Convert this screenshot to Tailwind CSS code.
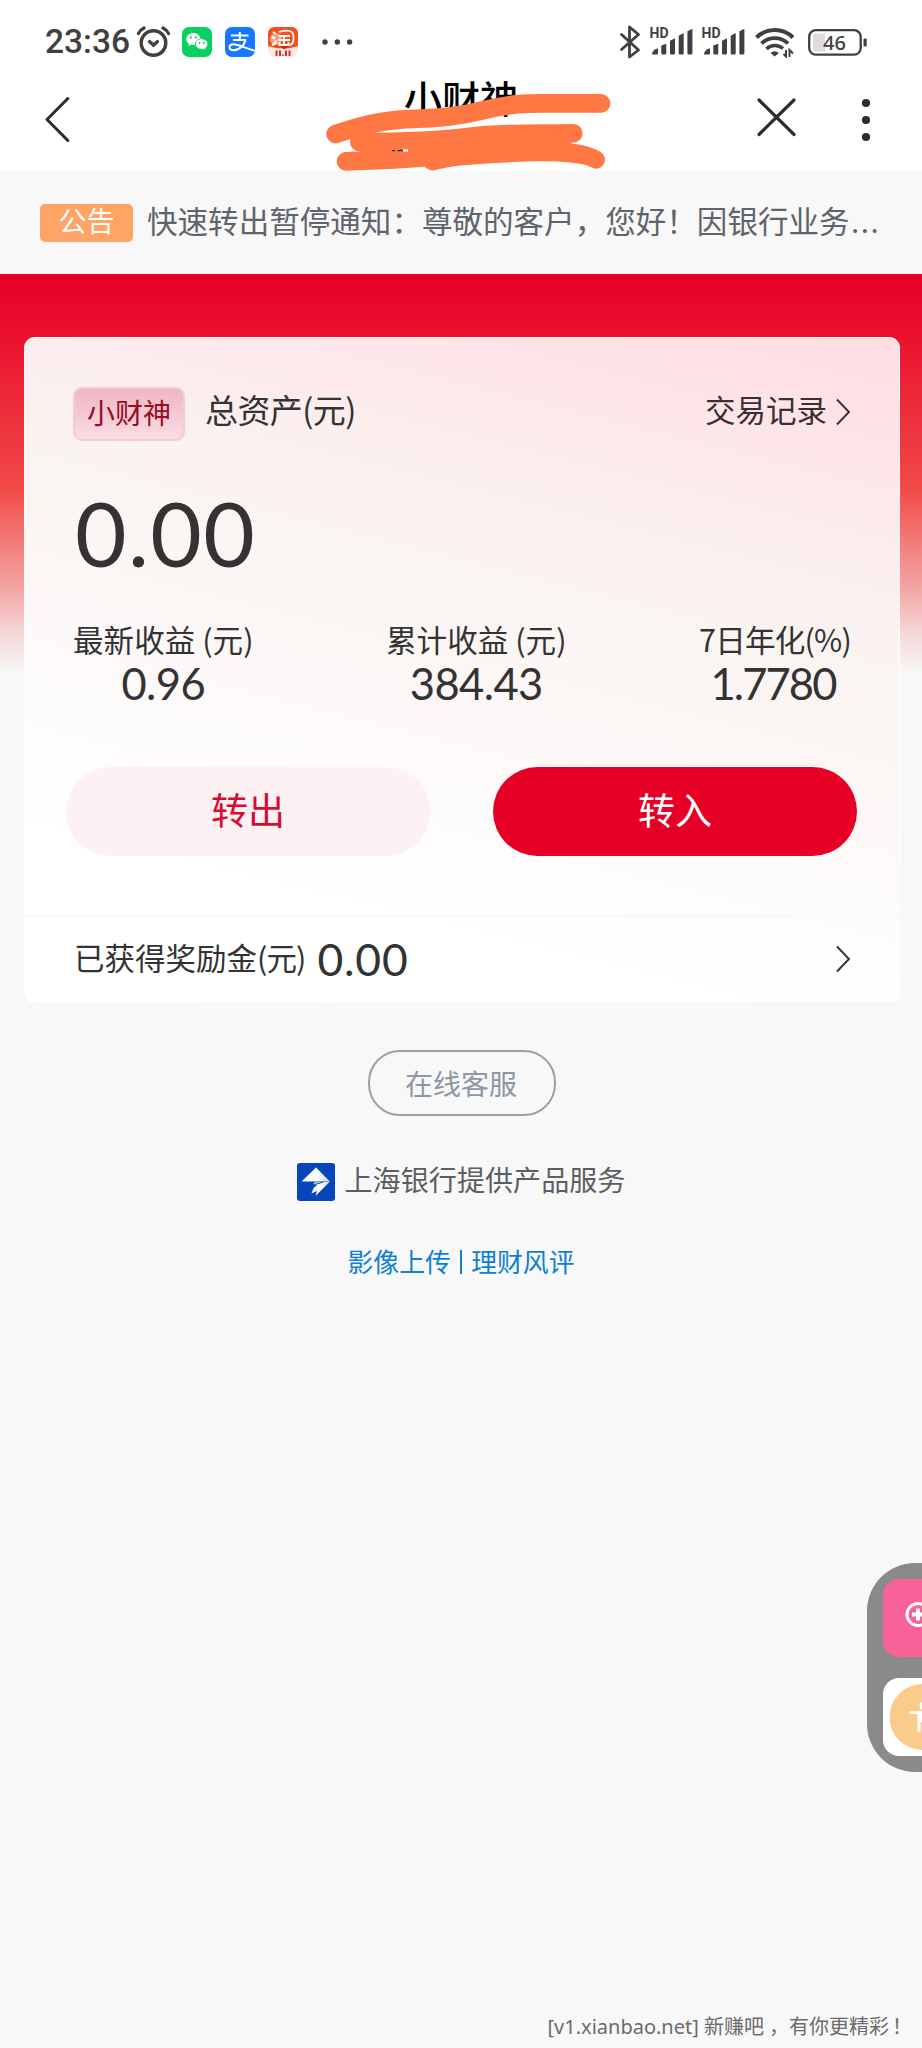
<!DOCTYPE html>
<html lang="zh-CN">
<head>
<meta charset="utf-8">
<title>小财神</title>
<script src="https://cdn.jsdelivr.net/npm/@tailwindcss/browser@4"></script>
</head>
<body class="relative flex h-[2048px] w-[922px] flex-col overflow-hidden bg-[#f8f8f8] font-['Noto_Sans_CJK_SC',sans-serif] font-normal whitespace-nowrap text-[#333]">

<!-- status bar -->
<header class="relative bg-white">
  <div class="flex h-[84px] items-center pl-[45px] text-[#404040]">
    <span class="w-[91px] font-[Roboto,sans-serif] text-[33.500px] leading-none font-medium">23:36</span>
    <svg class="h-[34px] w-[34px]" viewBox="0 0 34 34" fill="none" stroke="#404040" stroke-linecap="round"><circle cx="17.5" cy="18" r="12.3" stroke-width="3.4"/><path d="M13.5 16.500l4 3.700 4-3.700" stroke-width="3.200"/><path d="M2.500 8.500Q4 5 8 3M32.500 8.500Q31 5 27 3" stroke-width="3.200"/></svg>
    <svg class="ml-[12px] h-[30px] w-[30px]" viewBox="0 0 30 30"><rect width="30" height="30" rx="7" fill="#07d160"/><path d="M11.300 6c-4 0-7 2.600-7 6 0 2 1 3.600 2.600 4.700L6.200 19l2.900-1.400c.7.200 1.500.3 2.200.3 4 0 7.100-2.600 7.100-5.900S15.300 6 11.300 6z" fill="#fff"/><path d="M19.600 11.800c-3.500 0-6.200 2.300-6.200 5.200s2.700 5.300 6.200 5.300c.7 0 1.300-.1 1.900-.3l2.500 1.300-.6-2.100c1.500-1 2.400-2.500 2.400-4.200 0-2.900-2.800-5.200-6.200-5.200z" fill="#fff" stroke="#07d160" stroke-width=".8"/><g fill="#07a850"><circle cx="8.800" cy="10.500" r="1"/><circle cx="13.700" cy="10.500" r="1"/><circle cx="17.500" cy="15.800" r=".9"/><circle cx="21.700" cy="15.800" r=".9"/></g></svg>
    <svg class="ml-[13px] h-[30px] w-[30px]" viewBox="0 0 30 30" fill="none" stroke="#fff"><rect width="30" height="30" rx="7" fill="#1677ff" stroke="none"/><path d="M6 8.500h17.500M14.800 5v8M8 13h13" stroke-width="2"/><path d="M20.500 13.500C19 18 14.500 23.300 9 23.300c-3 0-4.500-1.300-4.500-3 0-1.900 1.700-3 4-3 4.500 0 11 3.500 21.500 6.500" stroke-width="2"/></svg>
    <svg class="ml-[13px] h-[30px] w-[30px]" viewBox="0 0 30 30"><rect width="30" height="30" rx="7" fill="#fde9e0"/><path d="M0 19V7q0-7 7-7h16q7 0 7 7v12q-15 5-30 0z" fill="#f0501c"/><circle cx="8" cy="12" r="6" fill="#f9a08a"/><path d="M5 5l3 2M4 10l3 1.500M4 18q4-1 4-5" stroke="#fff" stroke-width="2" fill="none"/><path d="M11 5q14-4 14.500 4T22 18h-3M11 9h11M10 13h12M16 9v9M11.500 15v3h9v-3" stroke="#fff" stroke-width="1.800" fill="none"/><path d="M12 19h9l-4.500 3.500z" fill="#d91b1b"/><path d="M8.500 23.500V29M12 23.500V29M18 23.500V29M21.500 23.500V29" stroke="#d82a25" stroke-width="2"/><circle cx="15" cy="28.200" r=".9" fill="#d82a25"/></svg>
    <svg class="ml-[24px] h-[6px] w-[31px]" viewBox="0 0 31 6" fill="#404040"><circle cx="3" cy="3" r="2.700"/><circle cx="15.300" cy="3" r="2.700"/><circle cx="27.600" cy="3" r="2.700"/></svg>
    <svg class="ml-[266px] h-[34px] w-[22px]" viewBox="0 0 22 34" fill="none" stroke="#404040" stroke-width="2.800" stroke-linecap="round" stroke-linejoin="round"><path d="M2.500 9.500L19.500 25 10.500 32V2L19.500 9.500 2.500 24.500"/></svg>
    <svg class="ml-[8px] h-[32px] w-[52px]" viewBox="-1 -2 52 32"><text x="-.5" y="10.300" font-family="Roboto" font-weight="700" font-size="14" fill="#404040">HD</text><g fill="#404040"><path d="M2 26.500q0-4.500 6-6.300v5q0 1.300-1.300 1.300H3z"/><path d="M11.300 17.500l5-1.800v9.500q0 1.300-1.300 1.300h-2.400q-1.300 0-1.300-1.300zM20 12.800l5-2.500v14.900q0 1.300-1.300 1.300h-2.400q-1.300 0-1.300-1.300zM28.700 7.800l5-2.700v20.100q0 1.300-1.300 1.300H30q-1.300 0-1.300-1.300zM37.400 3.200l5-2.500v24.500q0 1.300-1.300 1.300h-2.400q-1.300 0-1.300-1.300z"/></g></svg>
    <svg class="h-[32px] w-[54px]" viewBox="-1 -2 54 32"><text x="-.5" y="10.300" font-family="Roboto" font-weight="700" font-size="14" fill="#404040">HD</text><g fill="#404040"><path d="M2 26.500q0-4.500 6-6.300v5q0 1.300-1.300 1.300H3z"/><path d="M11.300 17.500l5-1.800v9.500q0 1.300-1.300 1.300h-2.400q-1.300 0-1.300-1.300zM20 12.800l5-2.500v14.900q0 1.300-1.300 1.300h-2.400q-1.300 0-1.300-1.300zM28.700 7.800l5-2.700v20.100q0 1.300-1.300 1.300H30q-1.300 0-1.300-1.300zM37.400 3.200l5-2.500v24.500q0 1.300-1.300 1.300h-2.400q-1.300 0-1.300-1.300z"/></g></svg>
    <svg class="h-[31px] w-[41px]" viewBox="0 0 41 31" fill="none" stroke="#404040"><path d="M1.500 10.500a26 26 0 0 1 36.500 0" stroke-width="4"/><path d="M6.500 16.500a19 19 0 0 1 26.500 0" stroke-width="3.800"/><path d="M11.500 22a12 12 0 0 1 16.500-.5" stroke-width="3.600"/><path d="M15.500 26q4-3.500 8.500 0l-4.300 3.500z" fill="#404040" stroke="none"/><path d="M31 23V29.500L28.500 27M34.500 30v-7l3.500 3.500" stroke-width="2"/></svg>
    <svg class="ml-[12px] h-[27px] w-[60px]" viewBox="0 0 60 27"><path d="M7 4.500h10v18H7q-2 0-2-2v-14q0-2 2-2z" fill="#ddd"/><rect x="1.200" y="1.200" width="51.500" height="24.400" rx="6.500" fill="none" stroke="#404040" stroke-width="2.300"/><rect x="55.500" y="9.500" width="3.200" height="8" rx="1" fill="#404040"/><text x="15" y="20.500" font-family="Noto Sans" font-weight="500" font-size="20" fill="#404040">46</text></svg>
  </div>

  <!-- navigation -->
  <div class="flex h-[87px] items-start pl-[44px]">
    <svg class="mt-[12px] h-[46px] w-[28px]" viewBox="0 0 28 46" fill="none" stroke="#2d2d2d" stroke-width="3" stroke-linecap="round" stroke-linejoin="round"><path d="M23.800 2.500L3 23.500l20.800 21"/></svg>
    <h1 class="-mt-[14px] ml-[332px] w-[352px] text-[38px] leading-[54px] font-medium text-black">小财神</h1>
    <svg class="mt-[12px] h-[42px] w-[40px]" viewBox="0 0 40 42" stroke="#2d2d2d" stroke-width="3.200" stroke-linecap="round"><path d="M3 4l35 34.500M38 4L3 38.500"/></svg>
    <svg class="mt-[12px] ml-[65px] h-[46px] w-[10px]" viewBox="0 0 10 46" fill="#2d2d2d"><circle cx="5" cy="7" r="4.100"/><circle cx="5" cy="24" r="4.100"/><circle cx="5" cy="41" r="4.100"/></svg>
  </div>
  <!-- marker strokes over the subtitle -->
  <svg class="absolute top-[60px] left-[310px] h-[120px] w-[320px]" viewBox="0 0 960 360" fill="none" stroke="#ff7844" stroke-linecap="round" stroke-linejoin="round">
    <path d="M77 222C130 204 200 184 270 179S420 177 520 151 680 131 730 130H873" stroke-width="56"/>
    <path d="M148 246C260 246 380 243 480 230S680 222 790 220" stroke-width="56"/>
    <path d="M150 245H785V251Q840 256 855 278L857 320Q780 303 690 304T480 314Q420 318 385 328 360 338 342 318L150 310Z" fill="#ff7844" stroke="none"/>
    <path d="M108 304L240 299 340 292" stroke-width="56"/>
    <path d="M780 278Q830 282 858 299" stroke-width="54"/>
    <path d="M278 268H294V275H278z" fill="#fff" stroke="none"/>
    <path d="M248 272h5M264 272h6l5-2 2 3" stroke="#222" stroke-width="4"/>
  </svg>
</header>

<!-- notice -->
<section class="flex h-[103px] items-start pt-[33px] pl-[40px]">
  <span class="flex h-[38px] w-[93px] items-center justify-center rounded-[5px] bg-[#ffa465] pb-[6px] text-[28px] leading-none text-white">公告</span>
  <p class="-mt-[3px] ml-[14px] w-[740px] text-[30.550px] leading-[38px] text-[#5f646b]">快速转出暂停通知：尊敬的客户，您好！因银行业务<span class="pl-[2px] font-[Lato] tracking-[2.500px]">...</span></p>
</section>

<!-- assets -->
<main class="h-[776px] bg-[linear-gradient(180deg,#e60025_0,#e60428_12px,#e9122e_63px,#f03f43_186px,#f14c48_216px,#f3a6a5_315px,#f5d8d8_360px,#f8f8f8_400px)] px-[24px] pt-[63px]">
  <div class="h-[666px] w-[876px] rounded-[11px] border border-white/80 bg-[linear-gradient(194deg,#ffdde2_0%,#fde6e9_16%,#fbf0ef_29%,#faf5f2_40%,#fcf6f5_50%,#fdfbfa_64%,#ffffff_80%)]">
    <div class="flex h-[146px] items-center px-[48px]">
      <span class="mt-[6px] flex h-[54px] w-[112px] items-center justify-center rounded-[9px] border-2 border-[#f7cbd3] bg-linear-to-b from-[#efb6c2] to-[#f9dde3] pb-[4px] text-[28px] leading-none text-[#950d26]">小财神</span>
      <span class="-mt-[3px] ml-[20px] text-[33px] leading-none tracking-[-.6px]">总资产(元)</span>
      <span class="-mt-[3px] ml-auto text-[30.500px] leading-none text-[#3a3033]">交易记录</span>
      <svg class="mt-[2px] mr-0 ml-[8px] h-[28px] w-[16px]" viewBox="0 0 16 28" fill="none" stroke="#3a3033" stroke-width="1.900"><path d="M2 1.500L14 14 2 26.500"/></svg>
    </div>
    <div class="-mt-[5px] flex h-[106px] items-center pl-[50px] font-[Lato] text-[89px] leading-none tracking-[1.300px]">0.00</div>
    <div class="mt-[32px] flex justify-between pr-[48px] pl-[48px] text-[30.600px]">
      <div class="text-center"><div class="leading-[44px]">最新收益 (元)</div><div class="font-[Lato] text-[43.500px] leading-[44px] tracking-[-.6px]">0.96</div></div>
      <div class="text-center"><div class="leading-[44px]">累计收益 (元)</div><div class="font-[Lato] text-[43.500px] leading-[44px] tracking-[-.6px]">384.43</div></div>
      <div class="text-center"><div class="leading-[44px] tracking-[-.8px]">7日年化(%)</div><div class="pr-[4px] font-[Lato] text-[43.500px] leading-[44px] tracking-[-1.900px]">1.7780</div></div>
    </div>
    <div class="mt-[62px] flex justify-between pr-[42px] pl-[41px] text-[37px]">
      <button class="h-[89px] w-[364px] rounded-full bg-[#fef1f3] pb-[3px] text-[#d80a30]">转出</button>
      <button class="h-[89px] w-[364px] rounded-full bg-[#e60026] pb-[3px] text-white">转入</button>
    </div>
    <div class="mt-[59px] flex h-[87px] items-center border-t border-[#f9f5f6] pr-[48px] pl-[49px]">
      <span class="-mt-[3px] text-[30.500px] leading-none">已获得奖励金<span class="tracking-[-.9px]">(元)</span></span>
      <span class="ml-[12px] font-[Lato] text-[44.500px] leading-none tracking-[.8px]">0.00</span>
      <svg class="ml-auto h-[28px] w-[16px]" viewBox="0 0 16 28" fill="none" stroke="#333" stroke-width="1.900"><path d="M2 1.500L14 14 2 26.500"/></svg>
    </div>
  </div>
</main>

<!-- service links -->
<section class="flex flex-col items-center">
  <button class="ml-[2px] h-[66px] w-[188px] rounded-[32px] border-2 border-[#98a1ab] pr-[2px] text-[28px] leading-none text-[#8e98a3]">在线客服</button>
  <div class="mt-[47px] flex h-[38px] items-center text-[28.100px] leading-none text-[#5b5f63]">
    <svg class="mr-[10px] h-[38px] w-[38px]" viewBox="0 0 38 38"><defs><linearGradient id="silver" x2="1"><stop stop-color="#f4f6fa"/><stop offset=".55" stop-color="#fff"/><stop offset="1" stop-color="#c5cad4"/></linearGradient></defs><rect width="38" height="38" rx="3" fill="#0546b8"/><path d="M19 4.500L33 18.500H4.500z" fill="url(#silver)"/><path d="M33 18.500L18.500 33l1.500-5-5.500 2.500 2-5.500 4-3.500-5 .5 2-2.500z" fill="url(#silver)"/><path d="M14 21.800l5.500-.8 7-2" stroke="#0546b8" stroke-width="1" fill="none"/></svg>
    <span class="-mt-[5px]">上海银行提供产品服务</span>
  </div>
  <nav class="mt-[42px] flex items-center text-[25.800px] leading-[36px] text-[#0e7fd2]">
    <a>影像上传</a><i class="mx-[9px] mt-[1px] h-[24px] w-[2.500px] bg-[#0e7fd2]"></i><a>理财风评</a>
  </nav>
</section>

<footer class="mt-auto flex h-[42px] items-center justify-end pr-[10px] font-['Noto_Sans','Noto_Sans_CJK_SC',sans-serif] text-[20px] text-[#6b6b6b]">[v1.xianbao.net]&nbsp;新赚吧<span class="indent-[5px]">，</span>有你更精彩<span class="indent-[3px]">！</span></footer>

<!-- floating shortcuts -->
<aside class="absolute top-[1563px] right-0 flex h-[209px] w-[55px] flex-col gap-[21px] overflow-hidden rounded-l-[48px] bg-[#8a8a8a] pt-[16px] pl-[16px]">
  <svg class="h-[78px] w-[39px]" viewBox="0 0 39 78"><rect width="78" height="78" rx="16" fill="#f96298"/><circle cx="35" cy="35.500" r="11" fill="none" stroke="#fff" stroke-width="3"/><path d="M35 29.500v12M29 35.500h12" stroke="#fff" stroke-width="4"/></svg>
  <svg class="h-[78px] w-[39px]" viewBox="0 0 39 78"><rect width="78" height="78" rx="16" fill="#fff"/><circle cx="39.500" cy="39" r="33" fill="#facb8a"/><circle cx="40.500" cy="28" r="4" fill="#fff"/><path d="M27.500 34.500h26M36 35v18M45 35v18M40 34v10" stroke="#fff" stroke-width="3" stroke-linecap="round"/><path d="M35 35h11v9H35z" fill="#fff"/></svg>
</aside>
</body>
</html>
